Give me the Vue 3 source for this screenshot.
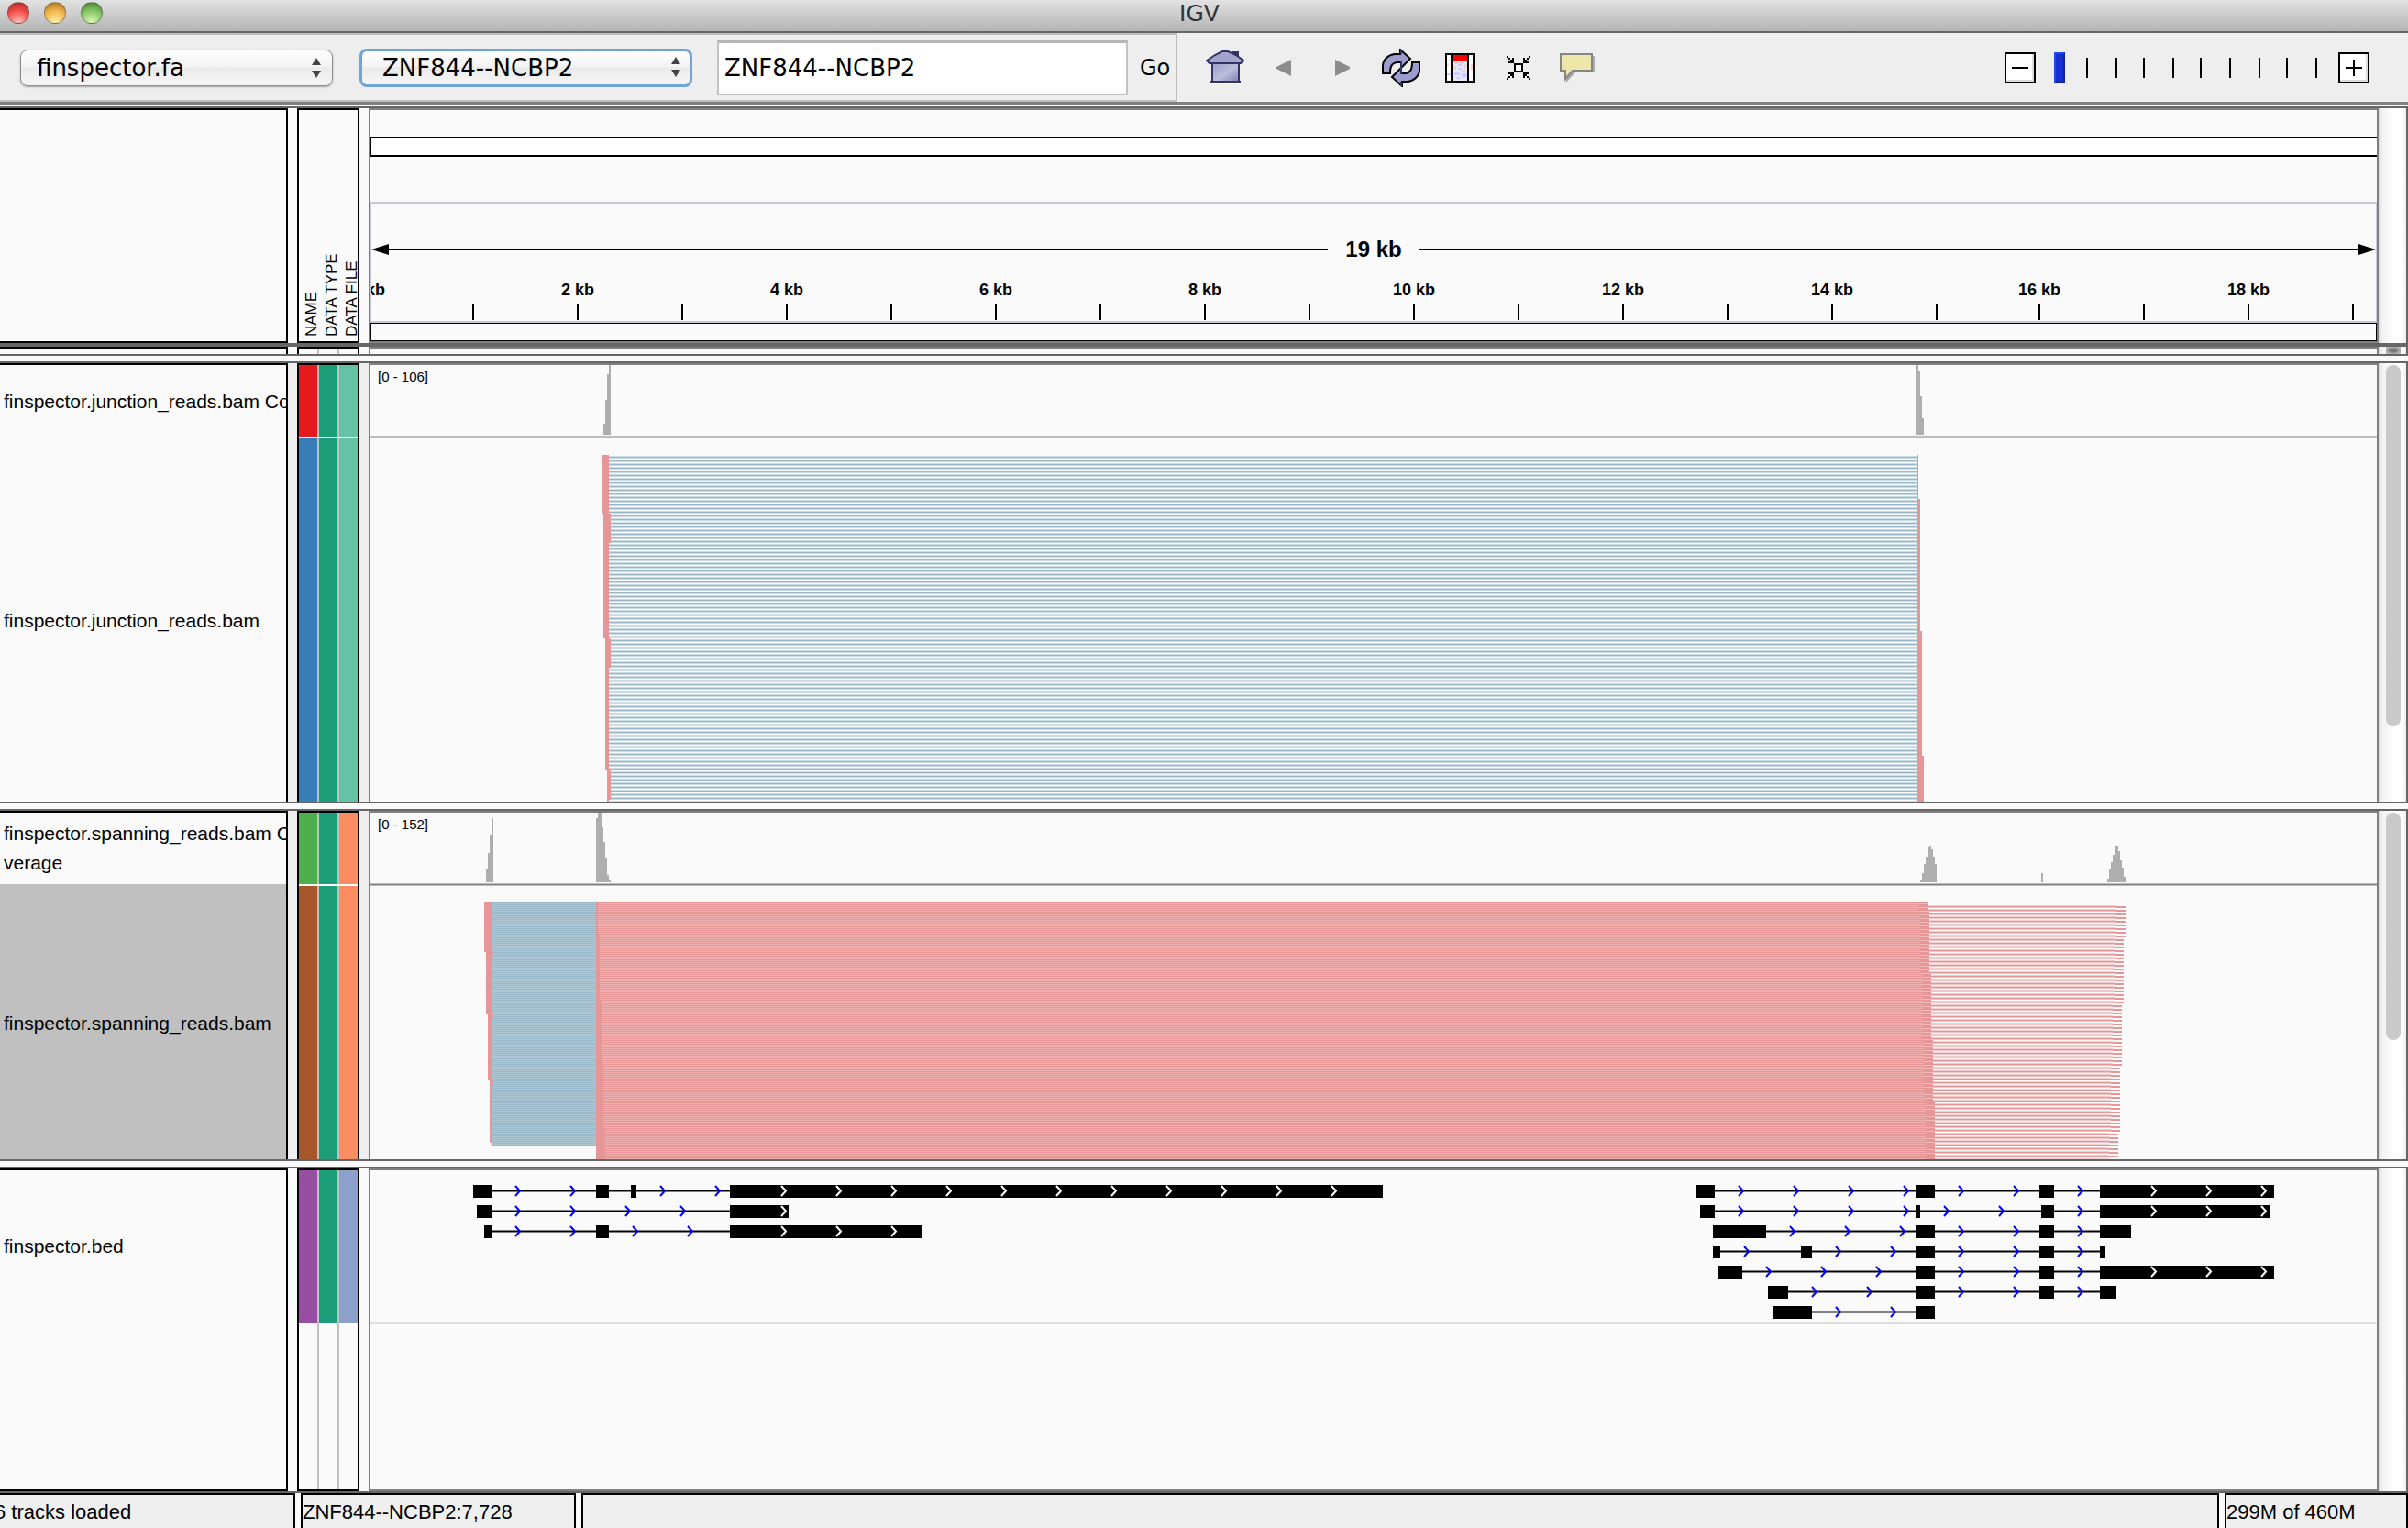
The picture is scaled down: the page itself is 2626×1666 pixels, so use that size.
<script setup>
import { ref } from 'vue'

const genome = ref('finspector.fa')
const chromosome = ref('ZNF844--NCBP2')
const locus = ref('ZNF844--NCBP2')
const zoom = ref(0)

const zoomTicks = [36, 68, 98, 130, 160, 192, 224, 254, 286]

/* Ruler: tick positions in view coordinates, the view runs from 404 to 2592 */
const ticks = [516, 630, 744, 858, 972, 1086, 1200, 1314, 1428, 1542, 1656, 1770, 1884, 1998, 2112, 2224, 2338, 2452, 2566]
const kbLabels = [{ text: '0 kb', x: 402 }].concat(
  ticks.filter((_, i) => i % 2 === 1).map((x, i) => ({ text: `${(i + 1) * 2} kb`, x }))
)
const leftOf = (x) => `${((x - 405) / 2186) * 100}%`

/* Coverage bars: [x, top] or [x, top, width] */
const junctionCoverage = [
  [658, 462], [660, 436], [662, 408], [664, 398],
  [2090, 398], [2092, 404], [2094, 432], [2096, 456]
]
const spanningCoverage = [
  [530, 948], [532, 930], [534, 910], [536, 892],
  [650, 892], [652, 886, 4], [656, 902], [658, 918], [660, 936], [662, 954], [664, 960],
  [2094, 960], [2096, 952], [2098, 942], [2100, 934], [2102, 924], [2104, 922], [2106, 926], [2108, 934], [2110, 942],
  [2226, 952],
  [2298, 958], [2300, 948], [2302, 940], [2304, 932], [2306, 922, 4], [2310, 928], [2312, 938], [2314, 946], [2316, 956]
]

/* Read blocks: [x1, y1, x2, y2] */
const junctionReads = [
  [656, 496, 664, 560], [658, 560, 666, 592], [658, 592, 664, 696], [660, 696, 666, 728],
  [660, 728, 664, 840], [662, 840, 666, 872], [662, 872, 664, 874],
  [2091, 496, 2092, 544], [2091, 544, 2094, 688], [2091, 688, 2096, 824], [2091, 824, 2098, 874]
]
const spanningReads = [
  [528, 984, 536, 1038], [530, 1038, 536, 1106], [536, 1038, 538, 1042], [532, 1106, 536, 1178],
  [536, 1106, 538, 1110], [534, 1178, 536, 1246], [536, 1178, 538, 1182], [536, 1246, 538, 1250],
  [650, 984, 652, 1018], [650, 1018, 654, 1090], [650, 1090, 656, 1158], [650, 1158, 658, 1230], [650, 1230, 660, 1264]
]
const pairedLines = [
  [2102, 987, 2308, 993], [2104, 993, 2308, 1023], [2104, 1023, 2306, 1061], [2106, 1061, 2306, 1095],
  [2106, 1095, 2304, 1133], [2108, 1133, 2304, 1163], [2108, 1163, 2302, 1201], [2110, 1201, 2302, 1235], [2110, 1235, 2300, 1264]
]
const mateBlocks = [
  [2092, 984, 2102, 993], [2094, 993, 2104, 1061], [2096, 1061, 2106, 1133], [2098, 1133, 2108, 1201], [2100, 1201, 2110, 1264]
]
const tipBlocks = [
  [2308, 988, 2318, 1023], [2306, 1023, 2316, 1095], [2304, 1095, 2314, 1163], [2302, 1163, 2312, 1235], [2300, 1235, 2310, 1264]
]

/* Gene models: exons as [x1, x2] */
const genes = [
  { row: 0, exons: [[516, 536], [650, 664], [688, 694], [796, 1508]] },
  { row: 1, exons: [[520, 536], [796, 860]] },
  { row: 2, exons: [[528, 536], [650, 664], [796, 1006]] },
  { row: 0, exons: [[1850, 1870], [2090, 2110], [2224, 2240], [2290, 2480]] },
  { row: 1, exons: [[1854, 1870], [2090, 2094], [2226, 2240], [2290, 2476]] },
  { row: 2, exons: [[1868, 1926], [2090, 2110], [2224, 2240], [2290, 2324]] },
  { row: 3, exons: [[1868, 1876], [1964, 1976], [2090, 2110], [2224, 2240], [2290, 2296]] },
  { row: 4, exons: [[1874, 1900], [2090, 2110], [2224, 2240], [2290, 2480]] },
  { row: 5, exons: [[1928, 1950], [2090, 2110], [2224, 2240], [2290, 2308]] },
  { row: 6, exons: [[1934, 1976], [2090, 2110]] }
].map(({ row, exons }) => {
  const blue = []
  const white = []
  exons.forEach(([start, end], i) => {
    for (let x = start + 60; x < end; x += 60) white.push(x)
    if (i + 1 < exons.length) {
      for (let x = end + 30; x < exons[i + 1][0]; x += 60) blue.push(x)
    }
  })
  return { y: 1292 + row * 22, exons, blue, white, x1: exons[0][0], x2: exons[exons.length - 1][1] }
})
const chevron = (x, y) => `M${x - 4} ${y + 1}L${x + 1} ${y + 6.5}L${x - 4} ${y + 12}`
</script>

<template>
  <div class="app">
    <header class="titlebar">
      <div class="lights">
        <button class="light red" aria-label="Close"></button>
        <button class="light amber" aria-label="Minimize"></button>
        <button class="light green" aria-label="Zoom window"></button>
      </div>
      <h1>IGV</h1>
    </header>

    <div class="toolbar">
      <form class="locator" @submit.prevent>
        <div class="combo genome">
          <select v-model="genome" aria-label="Genome"><option>finspector.fa</option></select>
          <svg width="10" height="22" viewBox="0 0 10 22"><path d="M5 0L10 8H0ZM0 14H10L5 22Z" fill="#444" /></svg>
        </div>
        <div class="combo chrom">
          <select v-model="chromosome" aria-label="Chromosome"><option>ZNF844--NCBP2</option></select>
          <svg width="10" height="22" viewBox="0 0 10 22"><path d="M5 0L10 8H0ZM0 14H10L5 22Z" fill="#444" /></svg>
        </div>
        <input v-model="locus" class="locus" type="text" aria-label="Locus" />
        <button class="go" type="submit">Go</button>
      </form>

      <nav class="tools">
        <button aria-label="Home">
          <svg width="42" height="38" viewBox="0 0 42 38">
            <defs>
              <linearGradient id="wall" x1="0" y1="0" x2="1" y2="1"><stop offset="0" stop-color="#9a9acb" /><stop offset=".55" stop-color="#bdbddc" /><stop offset="1" stop-color="#7f7fb4" /></linearGradient>
            </defs>
            <path d="M6 36H40M40 16H42" stroke="#fff" stroke-width="2" />
            <path d="M28 1H36V10L28 6Z" fill="#333366" />
            <path d="M7 13H36V34H7Z" fill="url(#wall)" stroke="#333366" stroke-width="2" />
            <path d="M1 11L10 5L18 1H24L33 5L41 11L38 14H4Z" fill="#a3a3cc" stroke="#333366" stroke-width="2" />
            <path d="M4 34H38" stroke="#333366" stroke-width="2" />
          </svg>
        </button>
        <button aria-label="Back"><svg width="16" height="18" viewBox="0 0 16 18"><path d="M16 0V18L0 10V8Z" fill="#8c8c8c" /></svg></button>
        <button aria-label="Forward"><svg width="16" height="18" viewBox="0 0 16 18"><path d="M0 0V18L16 10V8Z" fill="#8c8c8c" /></svg></button>
        <button aria-label="Refresh">
          <svg width="42" height="42" viewBox="0 0 42 42">
            <g fill="#9c9cce" stroke="#000" stroke-width="2">
              <path d="M1 27V19C1 12 7 7 14 6H20V1L31 11L21 21V15H16C11 16 9 19 9 27Z" />
              <path d="M41 15V23C41 30 35 35 28 36H22V41L11 31L21 21V27H26C31 26 33 23 33 15Z" />
            </g>
            <path d="M21 1V6M21 36V41M21 14V28" stroke="#333366" stroke-width="2" />
          </svg>
        </button>
        <button aria-label="Region of interest">
          <svg width="32" height="32" viewBox="0 0 32 32" shape-rendering="crispEdges">
            <path d="M0 0H32V32H0Z" fill="#000" /><path d="M2 2H6V30H2ZM26 2H30V30H26Z" fill="#fff" /><path d="M8 2H24V30H8Z" fill="#e6e6fa" />
            <path d="M8 2H24V8H8Z" fill="#f00" />
            <path d="M10 10H14V12H10ZM20 12H24V14H20ZM8 14H12V18H8ZM16 10H20V12H16ZM2 12H4V14H2ZM18 18H22V20H18ZM28 12H30V18H28Z" fill="#ffcccc" />
            <path d="M14 12H18V14H14ZM10 20H16V24H10ZM14 16H18V18H14ZM18 22H24V26H18ZM12 26H16V28H12ZM20 14H22V16H20ZM2 22H6V24H2Z" fill="#ccccff" />
          </svg>
        </button>
        <button aria-label="Fit data to window">
          <svg width="26" height="26" viewBox="0 0 26 26" shape-rendering="crispEdges">
            <path d="M9 9H17V17H9Z" fill="#fff" stroke="#000" stroke-width="2" />
            <path d="M0 0H2V2H4V4H6V2H8V8H2V6H4V4H2V2H0ZM26 0H24V2H22V4H20V2H18V8H24V6H22V4H24V2H26ZM0 26H2V24H4V22H6V24H8V18H2V20H4V22H2V24H0ZM26 26H24V24H22V22H20V24H18V18H24V20H22V22H24V24H26Z" />
          </svg>
        </button>
        <button aria-label="Popup text behavior">
          <svg width="38" height="32" viewBox="0 0 38 32">
            <path d="M3 3H38V21H17L7 32L6 21H3Z" fill="#aaa" />
            <path d="M1 1H35V19H14L6 28V19H1Z" fill="#ece6a8" stroke="#858585" stroke-width="2" />
          </svg>
        </button>
      </nav>

      <div class="zoomer">
        <button class="step" aria-label="Zoom out"><svg width="18" height="18" viewBox="0 0 18 18"><path d="M0 9H18" stroke="#000" stroke-width="2" /></svg></button>
        <div class="track">
          <svg width="296" height="22" viewBox="0 0 296 22" shape-rendering="crispEdges"><rect v-for="t in zoomTicks" :key="t" :x="t - 1" y="0" width="2" height="22" /></svg>
          <input v-model="zoom" type="range" min="0" max="9" aria-label="Zoom level" />
        </div>
        <button class="step" aria-label="Zoom in"><svg width="18" height="18" viewBox="0 0 18 18"><path d="M0 9H18M9 0V18" stroke="#000" stroke-width="2" /></svg></button>
      </div>
    </div>

    <main>
      <section class="row header">
        <div class="names boxed"></div>
        <div class="attrs boxed heads"><span>NAME</span><span>DATA TYPE</span><span>DATA FILE</span></div>
        <div class="data boxed">
          <div class="ideogram"></div>
          <div class="ruler">
            <div class="span">
              <svg width="19" height="12" viewBox="0 0 19 12"><path d="M0 6L19 0V12Z" /></svg>
              <i></i><b>19 kb</b><i></i>
              <svg width="19" height="12" viewBox="0 0 19 12"><path d="M19 6L0 0V12Z" /></svg>
            </div>
            <div class="labels"><span v-for="l in kbLabels" :key="l.text" :style="{ left: leftOf(l.x) }">{{ l.text }}</span></div>
            <svg class="ticks" viewBox="405 331 2186 18" preserveAspectRatio="none" shape-rendering="crispEdges"><rect v-for="t in ticks" :key="t" :x="t - 1" y="331" width="2" height="18" /></svg>
          </div>
          <div class="sequence"></div>
        </div>
        <div class="scroll"></div>
      </section>

      <section class="row sliver">
        <div class="names"></div>
        <div class="attrs"><div class="swatches"><i></i><i></i><i></i></div></div>
        <div class="data"></div>
        <div class="scroll"><div class="thumb"></div></div>
      </section>
      <div class="splitter"></div>

      <section class="row junction">
        <div class="names">
          <div class="name coverage">finspector.junction_reads.bam Co</div>
          <div class="name">finspector.junction_reads.bam</div>
        </div>
        <div class="attrs">
          <div class="swatches coverage"><i class="c-red"></i><i class="c-teal"></i><i class="c-mint"></i></div>
          <div class="swatches"><i class="c-blue"></i><i class="c-teal"></i><i class="c-mint"></i></div>
        </div>
        <div class="data">
          <svg class="plot" viewBox="404 398 2188 476" preserveAspectRatio="none" shape-rendering="crispEdges">
            <defs>
              <pattern id="jline" width="8" height="4" patternUnits="userSpaceOnUse"><path d="M0 1H8V4H0Z" fill="#ccdce4" /><path d="M0 2H8V3H0Z" fill="#99b8c9" /></pattern>
            </defs>
            <rect v-for="b in junctionCoverage" :key="b[0]" :x="b[0]" :y="b[1]" :width="b[2] || 2" :height="474 - b[1]" fill="#aeaeae" />
            <rect x="404" y="475" width="2188" height="3" fill="#bdbdbd" /><rect x="404" y="476" width="2188" height="1" fill="#808080" />
            <rect x="664" y="496" width="1427" height="378" fill="url(#jline)" />
            <rect v-for="(r, i) in junctionReads" :key="i" :x="r[0]" :y="r[1]" :width="r[2] - r[0]" :height="r[3] - r[1]" fill="#e69696" />
          </svg>
          <span class="range">[0 - 106]</span>
        </div>
        <div class="scroll"><div class="thumb"></div></div>
      </section>
      <div class="splitter"></div>

      <section class="row spanning">
        <div class="names">
          <div class="name coverage">finspector.spanning_reads.bam Co<br />verage</div>
          <div class="name selected">finspector.spanning_reads.bam</div>
        </div>
        <div class="attrs">
          <div class="swatches coverage"><i class="c-green"></i><i class="c-teal"></i><i class="c-orange"></i></div>
          <div class="swatches"><i class="c-brown"></i><i class="c-teal"></i><i class="c-orange"></i></div>
        </div>
        <div class="data">
          <svg class="plot" viewBox="404 886 2188 378" preserveAspectRatio="none" shape-rendering="crispEdges">
            <defs>
              <pattern id="sblue" width="8" height="2" patternUnits="userSpaceOnUse"><path d="M0 0H8V2H0Z" fill="#adc8d4" /><path d="M0 0H8V1H0Z" fill="#99b8c9" /></pattern>
              <pattern id="spink" width="8" height="2" patternUnits="userSpaceOnUse"><path d="M0 0H8V2H0Z" fill="#efb0b0" /><path d="M0 0H8V1H0Z" fill="#e69696" /></pattern>
              <pattern id="spair" width="8" height="4" patternUnits="userSpaceOnUse"><path d="M0 0H8V1H0Z" fill="#e69696" /><path d="M0 1H8V2H0Z" fill="#f6c2c2" /><path d="M0 3H8V4H0Z" fill="#efcfcf" /></pattern>
              <pattern id="smate" width="8" height="4" patternUnits="userSpaceOnUse"><path d="M0 0H8V4H0Z" fill="#e69696" /><path d="M0 1H8V2H0Z" fill="#f2b9b9" /></pattern>
              <pattern id="stip" width="8" height="4" patternUnits="userSpaceOnUse"><path d="M0 0H8V2H0Z" fill="#e69696" /></pattern>
            </defs>
            <rect v-for="b in spanningCoverage" :key="b[0]" :x="b[0]" :y="b[1]" :width="b[2] || 2" :height="962 - b[1]" fill="#aeaeae" />
            <rect x="404" y="963" width="2188" height="3" fill="#bdbdbd" /><rect x="404" y="964" width="2188" height="1" fill="#808080" />
            <rect x="536" y="983" width="115" height="267" fill="url(#sblue)" />
            <rect x="651" y="983" width="1449" height="281" fill="url(#spink)" />
            <rect v-for="(r, i) in pairedLines" :key="'p' + i" :x="r[0]" :y="r[1]" :width="r[2] - r[0]" :height="r[3] - r[1]" fill="url(#spair)" />
            <rect v-for="(r, i) in mateBlocks" :key="'m' + i" :x="r[0]" :y="r[1]" :width="r[2] - r[0]" :height="r[3] - r[1]" fill="url(#smate)" />
            <rect v-for="(r, i) in tipBlocks" :key="'t' + i" :x="r[0]" :y="r[1]" :width="r[2] - r[0]" :height="r[3] - r[1]" fill="url(#stip)" />
            <rect v-for="(r, i) in spanningReads" :key="i" :x="r[0]" :y="r[1]" :width="r[2] - r[0]" :height="r[3] - r[1]" fill="#e69696" />
          </svg>
          <span class="range">[0 - 152]</span>
        </div>
        <div class="scroll"><div class="thumb"></div></div>
      </section>
      <div class="splitter"></div>

      <section class="row bed">
        <div class="names boxed"><div class="name feature">finspector.bed</div></div>
        <div class="attrs boxed">
          <div class="swatches feature"><i class="c-purple"></i><i class="c-teal"></i><i class="c-peri"></i></div>
          <div class="swatches"><i></i><i></i><i></i></div>
        </div>
        <div class="data boxed">
          <svg class="plot genes" viewBox="404 1276 2188 168" preserveAspectRatio="none">
            <g v-for="(g, i) in genes" :key="i">
              <g shape-rendering="crispEdges">
                <rect :x="g.x1" :y="g.y + 5" :width="g.x2 - g.x1" height="3" fill="#808080" />
                <rect :x="g.x1" :y="g.y + 6" :width="g.x2 - g.x1" height="1" />
                <rect v-for="e in g.exons" :key="e[0]" :x="e[0]" :y="g.y" :width="e[1] - e[0]" height="14" />
              </g>
              <path v-for="x in g.blue" :key="'b' + x" :d="chevron(x, g.y)" fill="none" stroke="#00f" stroke-width="2" />
              <path v-for="x in g.white" :key="'w' + x" :d="chevron(x, g.y)" fill="none" stroke="#fff" stroke-width="2" />
            </g>
            <rect x="404" y="1441" width="2188" height="3" fill="#dedee4" /><rect x="404" y="1442" width="2188" height="1" fill="#c4c4d0" />
          </svg>
        </div>
        <div class="scroll"></div>
      </section>
    </main>

    <footer class="status">
      <div class="cell loaded">6 tracks loaded</div>
      <div class="cell position">ZNF844--NCBP2:7,728</div>
      <div class="cell message"></div>
      <div class="cell memory">299M of 460M</div>
    </footer>
  </div>
</template>

<style>
html, body { margin: 0; background: #fafafa; }
</style>

<style scoped>
* { box-sizing: border-box; }
.app { display: flex; flex-direction: column; min-height: 100vh; overflow: hidden; background: #fafafa; color: #000; font-family: "Liberation Sans", Arial, sans-serif; }
svg { display: block; flex: none; }
button { margin: 0; padding: 0; border: 0; background: none; }

.titlebar { display: grid; grid-template-columns: 1fr auto 1fr; height: 36px; padding-right: 10px; border-bottom: 2px solid #666; background: linear-gradient(#e2e2e2, #b4b4b4); }
.titlebar h1 { margin: 0; font: 400 25px/30px "DejaVu Sans", sans-serif; color: #333; }
.lights { display: flex; gap: 16px; padding: 2px 8px; }
.light { width: 24px; height: 24px; border-radius: 50%; border: 1px solid #5558; }
.red { background: radial-gradient(circle at 50% 100%, #ffc5bd 0, #f4504c 55%, #a82422 100%); }
.amber { background: radial-gradient(circle at 50% 100%, #fff4b0 0, #f3b54c 55%, #a06a20 100%); }
.green { background: radial-gradient(circle at 50% 100%, #e0ffb4 0, #86c566 55%, #3c7a2a 100%); }

.toolbar { display: flex; align-items: center; height: 79px; border-bottom: 4px solid #808080; background: #eee; }
.locator { display: flex; align-items: center; align-self: stretch; padding: 0 7px 0 22px; border: solid #bdbdbd; border-width: 2px 2px 2px 0; font-family: "DejaVu Sans", sans-serif; }
.combo { position: relative; }
.combo svg { position: absolute; right: 13px; top: 9px; }
.combo select { appearance: none; display: block; width: 100%; height: 40px; margin: 0; padding: 0 17px; border: 1px solid #8d8d8d; border-radius: 8px; background: linear-gradient(#fff, #f4f4f4 45%, #eaeaea 50%, #f6f6f6); box-shadow: 0 1px 2px #0005; font: 26px/36px "DejaVu Sans", sans-serif; color: #000; }
.genome { width: 341px; margin-right: 29px; }
.chrom { width: 363px; margin-right: 27px; }
.chrom select { height: 42px; padding: 0 22px; border: 3px solid #6fa4d8; box-shadow: none; }
.locus { width: 448px; height: 60px; margin: 0 13px 0 0; padding: 0 6px; border: 2px solid #c2c2c2; border-top: 3px solid #b5b5b5; border-radius: 0; background: #fff; font: 26px "DejaVu Sans", sans-serif; color: #000; }
.go { width: 32px; font: 24px "DejaVu Sans", sans-serif; color: #000; }
.tools { display: flex; margin-left: 20px; }
.tools button { display: grid; place-items: center; width: 64px; height: 48px; }
.zoomer { display: flex; align-items: center; margin: 0 42px 0 auto; }
.step { display: grid; place-items: center; width: 34px; height: 34px; border: 2px solid #000; background: #fff; box-shadow: inset -2px -2px #ddd; }
.track { display: grid; align-items: center; margin: 0 14px 0 20px; }
.track > * { grid-area: 1 / 1; }
.track input { appearance: none; width: 100%; height: 34px; margin: 0; background: none; }
.track input::-webkit-slider-thumb { appearance: none; width: 12px; height: 34px; border: 2px solid; border-color: #2247ff #15229a #15229a #2247ff; background: #1430d0; }

main { display: flex; flex-direction: column; flex: 1; padding-top: 1px; }
.row { display: grid; grid-template-columns: 314px 68px minmax(0, 1fr) 22px; column-gap: 10px; border: solid #666; border-width: 2px 0; }
.scroll { margin-left: -10px; border-right: 2px solid #666; background: linear-gradient(90deg, #dcdcdc, #f3f3f3 15%, #fff 60%, #fff 85%, #eee); padding: 2px 6px 0 8px; overflow: hidden; }
.header { height: 260px; }
.sliver { height: 12px; }
.junction { height: 482px; background: #eee; }
.spanning { height: 384px; background: #eee; }
.bed { flex: 1; min-height: 240px; }
.splitter { height: 6px; background: #fafafa; }

.names, .attrs, .data { display: flex; flex-direction: column; min-width: 0; overflow: hidden; background: #fafafa; }
.names { border: solid #000; border-width: 2px 2px 0 0; }
.attrs { border: solid #000; border-width: 2px 2px 0; }
.data { position: relative; border: solid #808080; border-width: 2px 2px 0; }
.boxed { border-bottom-width: 2px; }

.name { display: flex; flex-direction: column; justify-content: center; flex: 1; padding: 3px 0 0 4px; font-size: 21px; line-height: 32px; white-space: nowrap; }
.name.coverage { flex: none; height: 78px; display: block; padding-top: 24px; }
.spanning .name.coverage { padding-top: 7px; }
.name.selected { background: #c0c0c0; }
.name.feature { flex: none; height: 166px; padding-top: 0; }

.heads { flex-direction: row; }
.heads span { flex: none; width: 22px; writing-mode: vertical-rl; transform: rotate(180deg); padding-top: 5px; font-size: 17px; line-height: 22px; white-space: nowrap; }
.heads span:first-child { margin-left: 3px; }
.swatches { display: grid; grid-template-columns: 20px 20px 20px; column-gap: 2px; flex: 1; background: linear-gradient(90deg, transparent 20px, #c0c0c0 20px 22px, transparent 22px 42px, #c0c0c0 42px 44px, transparent 44px); }
.swatches.coverage { flex: none; height: 80px; border-bottom: 2px solid #fff; }
.swatches.feature { flex: none; height: 166px; }
.c-red { background: #e41a1c; } .c-teal { background: #1b9e77; } .c-mint { background: #66c2a5; } .c-blue { background: #377eb8; }
.c-green { background: #4daf4a; } .c-orange { background: #fc8d62; } .c-brown { background: #a65628; } .c-purple { background: #984ea3; } .c-peri { background: #8da0cb; }

.plot { width: 100%; flex: 1; min-height: 0; }
.plot.genes { flex: none; height: 168px; }
.range { position: absolute; left: 8px; top: 4px; font-size: 15px; line-height: 18px; }

.ideogram { flex: none; height: 22px; margin: 29px 0 49px; border: solid #000; border-width: 2px 0 2px 1px; background: #fff; }
.ruler { flex: none; height: 132px; padding-top: 35px; border: solid #c8c8d4; border-width: 2px 1px; overflow: hidden; }
.span { display: flex; align-items: center; height: 30px; }
.span i { flex: 1; height: 2px; background: #000; }
.span b { width: 100px; text-align: center; font-size: 24px; line-height: 30px; }
.labels { position: relative; height: 22px; margin: 18px 0 4px; }
.labels span { position: absolute; transform: translateX(-50%); font-size: 18px; font-weight: 700; line-height: 22px; white-space: nowrap; }
.ticks { width: 100%; height: 18px; }
.sequence { flex: none; height: 20px; border: 1px solid #000; }

.thumb { width: 16px; border-radius: 8px; background: #c9c9c9; }
.junction .thumb { height: 394px; }
.spanning .thumb { height: 248px; }
.sliver .scroll { padding-top: 0; }
.sliver .thumb { height: 8px; border-radius: 0; background: radial-gradient(ellipse at 50% 50%, #777 0 30%, #aaa 60%, #bbb); }

.status { display: flex; gap: 6px; height: 38px; background: #fafafa; font-size: 22px; }
.cell { flex: none; border: solid #000; border-width: 2px 2px 0; background: #efefef; line-height: 37px; white-space: nowrap; overflow: hidden; }
.loaded { width: 322px; border-left: 0; text-indent: -6px; }
.position { width: 300px; }
.message { flex: 1; }
.memory { width: 200px; }
</style>
